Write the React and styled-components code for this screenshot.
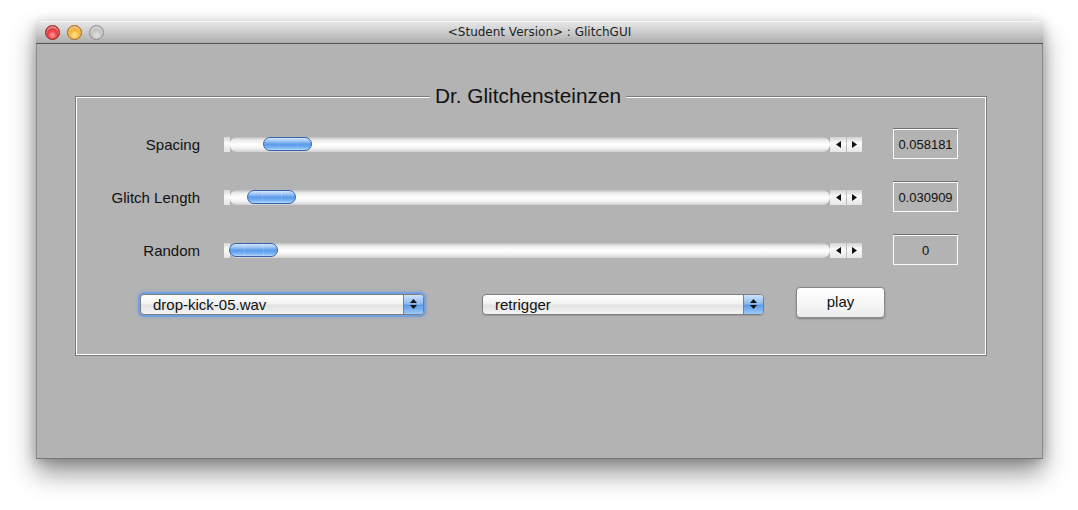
import React from "react";
import styled, { createGlobalStyle } from "styled-components";

const sliders = [
  { label: "Spacing", value: 0.058181, text: "0.058181" },
  { label: "Glitch Length", value: 0.030909, text: "0.030909" },
  { label: "Random", value: 0, text: "0" },
];

const GlobalStyle = createGlobalStyle`
  html, body {
    margin: 0;
    padding: 0;
    background: #ffffff;
  }
  body {
    font-family: "Liberation Sans", Arial, sans-serif;
  }
`;

const Page = styled.div`
  width: 1078px;
  height: 510px;
  padding: 21px 0 0 36px;
  box-sizing: border-box;
  overflow: hidden;
`;

const Window = styled.div`
  width: 1007px;
  height: 438px;
  display: flex;
  flex-direction: column;
  border-radius: 5px 5px 0 0;
  background: #b3b3b3;
  box-shadow: 0 14px 26px rgba(0, 0, 0, 0.42), 0 2px 12px rgba(0, 0, 0, 0.22);
  overflow: hidden;
`;

const TitleBar = styled.div`
  height: 22px;
  flex-shrink: 0;
  display: flex;
  align-items: center;
  position: relative;
  border-bottom: 1px solid #555;
  border-radius: 5px 5px 0 0;
  background: linear-gradient(to bottom, #e9e9e9 0%, #d0d0d0 45%, #acacac 100%);
  box-shadow: inset 0 1px 0 #f6f6f6;
`;

const Lights = styled.div`
  display: flex;
  gap: 7px;
  padding: 1px 0 0 9px;
`;

const Light = styled.div`
  width: 13px;
  height: 13px;
  border-radius: 50%;
  border: 1px solid ${(p) => p.$edge};
  background: radial-gradient(
    circle at 50% 70%,
    ${(p) => p.$glow} 0%,
    ${(p) => p.$mid} 45%,
    ${(p) => p.$dark} 100%
  );
  box-shadow: inset 0 2px 2px rgba(255, 255, 255, 0.55);
`;

const Title = styled.div`
  position: absolute;
  left: 0;
  right: 0;
  top: 4px;
  text-align: center;
  font-family: "DejaVu Sans", sans-serif;
  font-size: 12px;
  color: #1e1e1e;
  pointer-events: none;
`;

const Content = styled.div`
  flex: 1;
  padding: 52px 0 0 38px;
  border-left: 1px solid #8a8a8a;
  border-right: 1px solid #8a8a8a;
  border-bottom: 1px solid #777;
`;

const Group = styled.div`
  position: relative;
  width: 912px;
  height: 260px;
  box-sizing: border-box;
  border: 1px solid #7c7c7c;
  box-shadow: inset 1px 1px 0 #ffffff, inset -1px -1px 0 #ffffff;
  display: flex;
  flex-direction: column;
  padding-top: 31px;
`;

const Legend = styled.div`
  position: absolute;
  top: -13px;
  left: 0;
  right: 6px;
  display: flex;
  justify-content: center;
  pointer-events: none;
`;

const LegendText = styled.span`
  background: #b3b3b3;
  padding: 0 5px;
  font-size: 20.8px;
  line-height: 24px;
  color: #111;
`;

const Row = styled.div`
  height: 32px;
  display: flex;
  align-items: center;
  margin-bottom: 21px;
`;

const Label = styled.div`
  width: 124px;
  text-align: right;
  font-size: 15px;
  color: #111;
  margin-right: 24px;
`;

const Slider = styled.div`
  width: 638px;
  height: 15px;
  display: flex;
`;

const EndCap = styled.div`
  width: 6px;
  background: linear-gradient(to bottom, #d6d6d6, #fbfbfb 40%, #e4e4e4);
`;

const Track = styled.div`
  position: relative;
  flex: 1;
  border-radius: 8px 9px 9px 8px;
  background: linear-gradient(
    to bottom,
    #bdbdbd 0%,
    #ececec 20%,
    #ffffff 50%,
    #f2f2f2 75%,
    #cfcfcf 100%
  );
`;

const Thumb = styled.div`
  position: absolute;
  top: 0;
  width: 49px;
  height: 14px;
  box-sizing: border-box;
  border-radius: 7px;
  border: 1px solid #3563a8;
  background: linear-gradient(
      to right,
      transparent 0 14px,
      rgba(255, 255, 255, 0.12) 14px 15px,
      transparent 15px 33px,
      rgba(255, 255, 255, 0.12) 33px 34px,
      transparent 34px
    ),
    linear-gradient(
      to bottom,
      #d4e6fc 0%,
      #9cc3f3 28%,
      #5a9bea 52%,
      #74aef1 76%,
      #b4d8fc 100%
    );
`;

const Arrows = styled.div`
  width: 32px;
  display: flex;
`;

const ArrowButton = styled.div`
  flex: 1;
  display: flex;
  align-items: center;
  justify-content: center;
  background: linear-gradient(to bottom, #d2d2d2, #fafafa 40%, #e6e6e6);
  border-left: 1px solid ${(p) => (p.$split ? "#bdbdbd" : "transparent")};
`;

const ValueBox = styled.div`
  width: 65px;
  height: 30px;
  box-sizing: border-box;
  margin-left: 31px;
  border: 1px solid #fafafa;
  box-shadow: 0 -1px 0 #707070;
  display: flex;
  align-items: center;
  justify-content: center;
  font-size: 13px;
  color: #111;
`;

const Controls = styled.div`
  display: flex;
  align-items: center;
  height: 32px;
  margin-top: 1px;
  padding-left: 64px;
`;

const Popup = styled.div`
  width: ${(p) => p.$w}px;
  height: 21px;
  box-sizing: border-box;
  margin-right: ${(p) => p.$gap}px;
  display: flex;
  border-radius: 4px;
  border: 1px solid #7d7d7d;
  background: linear-gradient(to bottom, #ffffff 0%, #f2f2f2 45%, #e2e2e2 55%, #f4f4f4 100%);
  box-shadow: ${(p) =>
    p.$focus
      ? "0 0 0 2px rgba(108, 156, 232, 0.85), 0 0 3px 3px rgba(108, 156, 232, 0.35)"
      : "0 1px 1px rgba(0, 0, 0, 0.15)"};
`;

const PopupText = styled.div`
  flex: 1;
  padding-left: 12px;
  font-size: 15px;
  line-height: 19px;
  color: #111;
`;

const Stepper = styled.div`
  width: 19px;
  display: flex;
  flex-direction: column;
  align-items: center;
  justify-content: center;
  gap: 2px;
  border-left: 1px solid #5a86c6;
  border-radius: 0 3px 3px 0;
  background: linear-gradient(to bottom, #cfe2fb 0%, #8fbbef 45%, #5d9de8 55%, #9ccaf7 100%);
`;

const PlayButton = styled.div`
  width: 89px;
  height: 31px;
  box-sizing: border-box;
  border-radius: 4px;
  border: 1px solid #8a8a8a;
  background: linear-gradient(to bottom, #ffffff 0%, #f7f7f7 50%, #ececec 100%);
  box-shadow: 0 1px 2px rgba(0, 0, 0, 0.3);
  display: flex;
  align-items: center;
  justify-content: center;
  padding-bottom: 2px;
  font-size: 15px;
  color: #111;
  margin-top: -4px;
`;

const Tri = ({ dir }) => {
  const pts = {
    left: "5,0 5,7 0,3.5",
    right: "0,0 0,7 5,3.5",
    up: "0,4 7,4 3.5,0",
    down: "0,0 7,0 3.5,4",
  }[dir];
  const vertical = dir === "up" || dir === "down";
  return (
    <svg
      width={vertical ? 7 : 5}
      height={vertical ? 4 : 7}
      viewBox={vertical ? "0 0 7 4" : "0 0 5 7"}
    >
      <polygon points={pts} fill="#111" />
    </svg>
  );
};

function SliderRow({ label, value, text }) {
  return (
    <Row>
      <Label>{label}</Label>
      <Slider>
        <EndCap />
        <Track>
          <Thumb style={{ left: -1 + value * 583 }} />
        </Track>
        <Arrows>
          <ArrowButton>
            <Tri dir="left" />
          </ArrowButton>
          <ArrowButton $split>
            <Tri dir="right" />
          </ArrowButton>
        </Arrows>
      </Slider>
      <ValueBox>{text}</ValueBox>
    </Row>
  );
}

function PopupMenu({ text, width, gap, focus }) {
  return (
    <Popup $w={width} $gap={gap} $focus={focus}>
      <PopupText>{text}</PopupText>
      <Stepper>
        <Tri dir="up" />
        <Tri dir="down" />
      </Stepper>
    </Popup>
  );
}

export default function App() {
  return (
    <>
      <GlobalStyle />
      <Page>
        <Window>
          <TitleBar>
            <Lights>
              <Light $edge="#9a1f1f" $glow="#ff9c9c" $mid="#e8383a" $dark="#a81414" />
              <Light $edge="#a5681a" $glow="#ffe69a" $mid="#f5b434" $dark="#c57a12" />
              <Light $edge="#8c8c8c" $glow="#e2e2e2" $mid="#c4c4c4" $dark="#9c9c9c" />
            </Lights>
            <Title>&lt;Student Version&gt; : GlitchGUI</Title>
          </TitleBar>
          <Content>
            <Group>
              <Legend>
                <LegendText>Dr. Glitchensteinzen</LegendText>
              </Legend>
              {sliders.map((s) => (
                <SliderRow key={s.label} {...s} />
              ))}
              <Controls>
                <PopupMenu text="drop-kick-05.wav" width={284} gap={58} focus />
                <PopupMenu text="retrigger" width={282} gap={32} />
                <PlayButton>play</PlayButton>
              </Controls>
            </Group>
          </Content>
        </Window>
      </Page>
    </>
  );
}
